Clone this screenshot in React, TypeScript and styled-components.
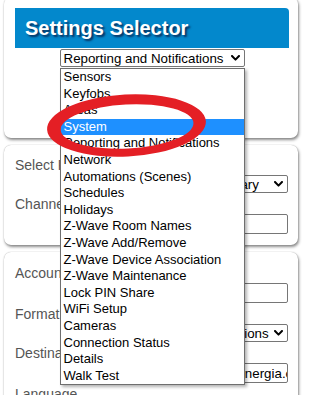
import React from "react";
import styled, { createGlobalStyle } from "styled-components";

const GlobalStyle = createGlobalStyle`
  html, body {
    margin: 0;
    padding: 0;
    background: #ffffff;
    overflow: hidden;
  }
  body {
    font-family: "Liberation Sans", Arial, sans-serif;
  }
`;

const Page = styled.div`
  position: relative;
  width: 306px;
  height: 395px;
  overflow: hidden;
  box-sizing: border-box;
  padding: 0 8px 0 4px;
`;

const Stack = styled.div`
  display: flex;
  flex-direction: column;
  gap: 7px;
  margin-top: -3px;
`;

const Card = styled.section`
  background: #ffffff;
  border-radius: 7px;
  box-shadow: 1px 2px 3px rgba(0, 0, 0, 0.45), 0 0 1px rgba(0, 0, 0, 0.35);
`;

const SelectorCard = styled(Card)`
  display: flex;
  flex-direction: column;
  align-items: center;
  padding: 11px 9px 71px 11px;
`;

const Header = styled.div`
  align-self: stretch;
  height: 40px;
  background: #0388cc;
  border-radius: 0 4px 0 0;
  display: flex;
  align-items: center;
  padding-left: 10px;
`;

const Title = styled.h1`
  margin: 0;
  font-size: 20px;
  line-height: 1;
  font-weight: bold;
  color: #ffffff;
  text-shadow: 2px 2px 2px rgba(10, 20, 60, 0.75);
`;

const SelectWrap = styled.div`
  position: relative;
  margin-top: 1px;
`;

const FakeSelect = styled.div<{ $width: number }>`
  box-sizing: border-box;
  width: ${(p) => p.$width}px;
  height: 18px;
  border: 1px solid #767676;
  border-radius: 2px;
  background: #ffffff;
  display: flex;
  align-items: center;
  justify-content: space-between;
  padding: 0 4px 0 3px;
  font-size: 13.33px;
  color: #000000;
  white-space: nowrap;
  overflow: hidden;
`;

const Chevron = styled.svg`
  flex: none;
  width: 9px;
  height: 6px;
`;

const DropList = styled.ul`
  position: absolute;
  left: 0;
  top: calc(100% + 1px);
  z-index: 10;
  box-sizing: border-box;
  width: 185px;
  margin: 0;
  padding: 0;
  list-style: none;
  background: #ffffff;
  border: 1px solid #6f6f6f;
  box-shadow: 2px 2px 3px rgba(0, 0, 0, 0.3);
`;

const Option = styled.li<{ $selected?: boolean }>`
  height: 16.6px;
  line-height: 16.6px;
  padding-left: 3px;
  font-size: 13px;
  white-space: nowrap;
  color: ${(p) => (p.$selected ? "#ffffff" : "#000000")};
  background: ${(p) => (p.$selected ? "#1e90ff" : "transparent")};
`;

const FieldCard = styled(Card)<{ $top: number }>`
  display: flex;
  flex-direction: column;
  gap: 5px;
  padding: ${(p) => p.$top}px 10px 11px 11px;
`;

const Field = styled.div`
  display: flex;
  flex-direction: column;
`;

const Label = styled.label`
  font-size: 14px;
  line-height: 12px;
  color: #555555;
  white-space: nowrap;
  margin-bottom: 4px;
`;

const FieldSelect = styled(FakeSelect)`
  align-self: flex-end;
`;

const TextInput = styled.input<{ $width: number }>`
  align-self: flex-end;
  box-sizing: border-box;
  width: ${(p) => p.$width}px;
  height: 20px;
  margin: 0;
  border: 1px solid #767676;
  border-radius: 2px;
  padding: 0 0 0 1px;
  font-family: "Liberation Sans", Arial, sans-serif;
  font-size: 13.33px;
  color: #000000;
  background: #ffffff;
  outline: none;
`;

const Annotation = styled.svg`
  position: absolute;
  left: 0;
  top: 0;
  width: 306px;
  height: 395px;
  z-index: 20;
  pointer-events: none;
`;

const options = [
  "Sensors",
  "Keyfobs",
  "Areas",
  "System",
  "Reporting and Notifications",
  "Network",
  "Automations (Scenes)",
  "Schedules",
  "Holidays",
  "Z-Wave Room Names",
  "Z-Wave Add/Remove",
  "Z-Wave Device Association",
  "Z-Wave Maintenance",
  "Lock PIN Share",
  "WiFi Setup",
  "Cameras",
  "Connection Status",
  "Details",
  "Walk Test",
];

const ChevronIcon = () => (
  <Chevron viewBox="0 0 9 6">
    <polyline
      points="1,1 4.5,4.6 8,1"
      fill="none"
      stroke="#000"
      strokeWidth="2"
      strokeLinecap="round"
      strokeLinejoin="round"
    />
  </Chevron>
);

export default function App() {
  return (
    <>
      <GlobalStyle />
      <Page>
        <Stack>
          <SelectorCard>
            <Header>
              <Title>Settings Selector</Title>
            </Header>
            <SelectWrap>
              <FakeSelect $width={185}>
                <span>Reporting and Notifications</span>
                <ChevronIcon />
              </FakeSelect>
              <DropList>
                {options.map((o) => (
                  <Option key={o} $selected={o === "System"}>
                    {o}
                  </Option>
                ))}
              </DropList>
            </SelectWrap>
          </SelectorCard>

          <FieldCard $top={14}>
            <Field>
              <Label>Select Receiver</Label>
              <FieldSelect $width={79}>
                <span>Primary</span>
                <ChevronIcon />
              </FieldSelect>
            </Field>
            <Field>
              <Label>Channel</Label>
              <TextInput $width={120} defaultValue="" />
            </Field>
          </FieldCard>

          <FieldCard $top={15}>
            <Field>
              <Label>Account Number</Label>
              <TextInput $width={120} defaultValue="" />
            </Field>
            <Field>
              <Label>Format</Label>
              <FieldSelect $width={133}>
                <span>Email Notifications</span>
                <ChevronIcon />
              </FieldSelect>
            </Field>
            <Field>
              <Label>Destination</Label>
              <TextInput $width={112} defaultValue="alarms@synergia.com" />
            </Field>
            <Field>
              <Label>Language</Label>
              <FieldSelect $width={120}>
                <span>English</span>
                <ChevronIcon />
              </FieldSelect>
            </Field>
          </FieldCard>
        </Stack>

        <Annotation viewBox="0 0 306 395">
          <path
            fill="#e41f25"
            fillRule="evenodd"
            transform="rotate(-3 126.5 125.5)"
            d="M47,125.5 a79.5,31 0 1,0 159,0 a79.5,31 0 1,0 -159,0 Z M60.5,126.5 a66.5,22 0 1,0 133,0 a66.5,22 0 1,0 -133,0 Z"
          />
        </Annotation>
      </Page>
    </>
  );
}
